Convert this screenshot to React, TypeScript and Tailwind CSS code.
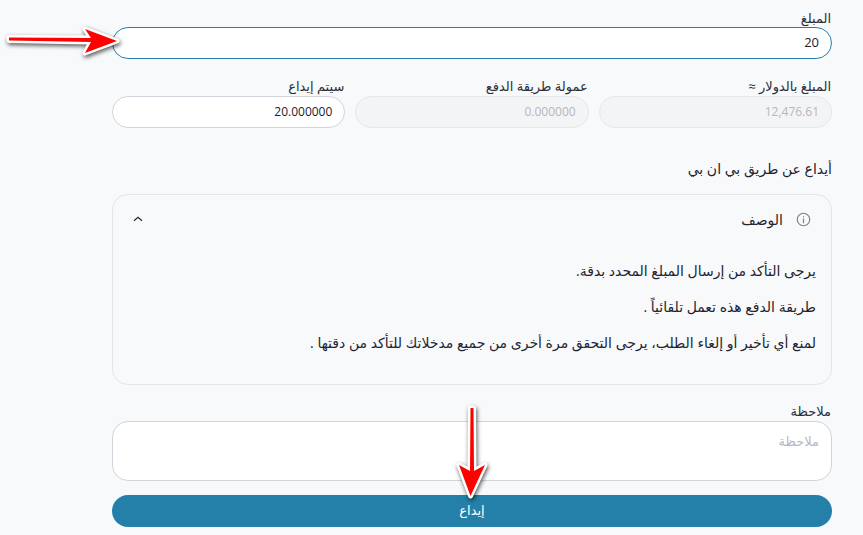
const font = "font-['Open_Sans','Noto_Sans','DejaVu_Sans',sans-serif]"

const RedArrow = ({ className, width, height, d }: { className: string; width: number; height: number; d: string }) => (
  <svg className={`drop-shadow-[1px_2px_2px_rgba(0,0,0,0.65)] ${className}`} width={width} height={height} viewBox={`0 0 ${width} ${height}`}>
    <path d={d} fill="#fe0000" stroke="#fff" strokeWidth="5" strokeLinejoin="round" paintOrder="stroke" />
  </svg>
)

const Field = ({ label, value, disabled }: { label: string; value: string; disabled?: boolean }) => (
  <div className="flex flex-col">
    <label className="h-[16px] pr-px text-[13px] leading-[16px] text-[#2b2f3a]">{label}</label>
    <div
      dir="ltr"
      className={`mt-[2px] flex h-[32px] items-center justify-end rounded-[16px] border px-[12px] text-[12px] ${
        disabled ? 'border-[#e5e7eb] bg-[#f3f4f6] text-[#b4b8c0]' : 'border-[#d1d5db] bg-white text-[#1b1b2b]'
      }`}
    >
      {value}
    </div>
  </div>
)

export default function App() {
  return (
    <div dir="rtl" className={`relative h-[535px] w-[863px] overflow-hidden bg-[#f8f9fb] ${font}`}>
      <div className="mr-[31px] w-[720px] pt-[10px]">
        <label className="block h-[16px] pr-px text-[13px] leading-[16px] text-[#2b2f3a]">المبلغ</label>
        <div dir="ltr" className="mt-px flex h-[32px] items-center justify-end rounded-[16px] border border-[#2480a8] bg-white px-[12px] text-[13px] text-[#1b1b2b]">
          20
        </div>

        <div className="mt-[19px] grid grid-cols-3 gap-[10px]">
          <Field label="المبلغ بالدولار ≈" value="12,476.61" disabled />
          <Field label="عمولة طريقة الدفع" value="0.000000" disabled />
          <Field label="سيتم إيداع" value="20.000000" />
        </div>

        <h2 className="mt-[30px] h-[22px] text-[14px] leading-[22px] text-[#1f2430]">أيداع عن طريق بي ان بي</h2>

        <div className="mt-[14px] h-[191px] rounded-[16px] border border-[#e2e5ea] px-[15px]">
          <div className="flex h-[48px] items-center justify-between pl-[4px] pr-[5px]">
            <div className="flex items-center gap-[13px]">
              <svg width="15" height="15" viewBox="0 0 24 24" fill="none" stroke="#7d828b" strokeWidth="1.9" strokeLinecap="round">
                <circle cx="12" cy="12" r="10" />
                <path d="M12 11v6M12 7.5v.2" />
              </svg>
              <span className="text-[14px] text-[#1f2430]">الوصف</span>
            </div>
            <svg width="12" height="12" viewBox="0 0 24 24" fill="none" stroke="#1f2430" strokeWidth="2.2">
              <path d="M4 15.5l8-7 8 7" />
            </svg>
          </div>
          <div className="mt-[18px] flex flex-col gap-[17px] text-[14px] leading-[19px] text-[#1f2430]">
            <p>يرجى التأكد من إرسال المبلغ المحدد بدقة.</p>
            <p>طريقة الدفع هذه تعمل تلقائياً .</p>
            <p>لمنع أي تأخير أو إلغاء الطلب، يرجى التحقق مرة أخرى من جميع مدخلاتك للتأكد من دقتها .</p>
          </div>
        </div>

        <label className="mt-[18px] block h-[16px] pr-px text-[13px] leading-[16px] text-[#2b2f3a]">ملاحظة</label>
        <div className="mt-[2px] h-[60px] rounded-[16px] border border-[#d1d5db] bg-white px-[12px] py-[9px] text-[13px] leading-[20px] text-[#b4b8c4]">
          ملاحظة
        </div>

        <button className="mt-[14px] flex h-[32px] w-full items-center justify-center rounded-[16px] bg-[#2480a8] text-[13px] font-medium text-white">
          إيداع
        </button>
      </div>

      {/* annotation arrows */}
      <RedArrow
        className="absolute left-0 top-[20px]"
        width={125}
        height={40}
        d="M9 17.5 L91 18 L85 9 L117 21 L85 33 L91 22 L9 20.5 Z"
      />
      <RedArrow
        className="absolute left-[450px] top-[400px]"
        width={45}
        height={105}
        d="M20.5 8 L23.5 8 L24 71 L35 65 L20.5 96 L9 65 L20 71 Z"
      />
    </div>
  )
}
